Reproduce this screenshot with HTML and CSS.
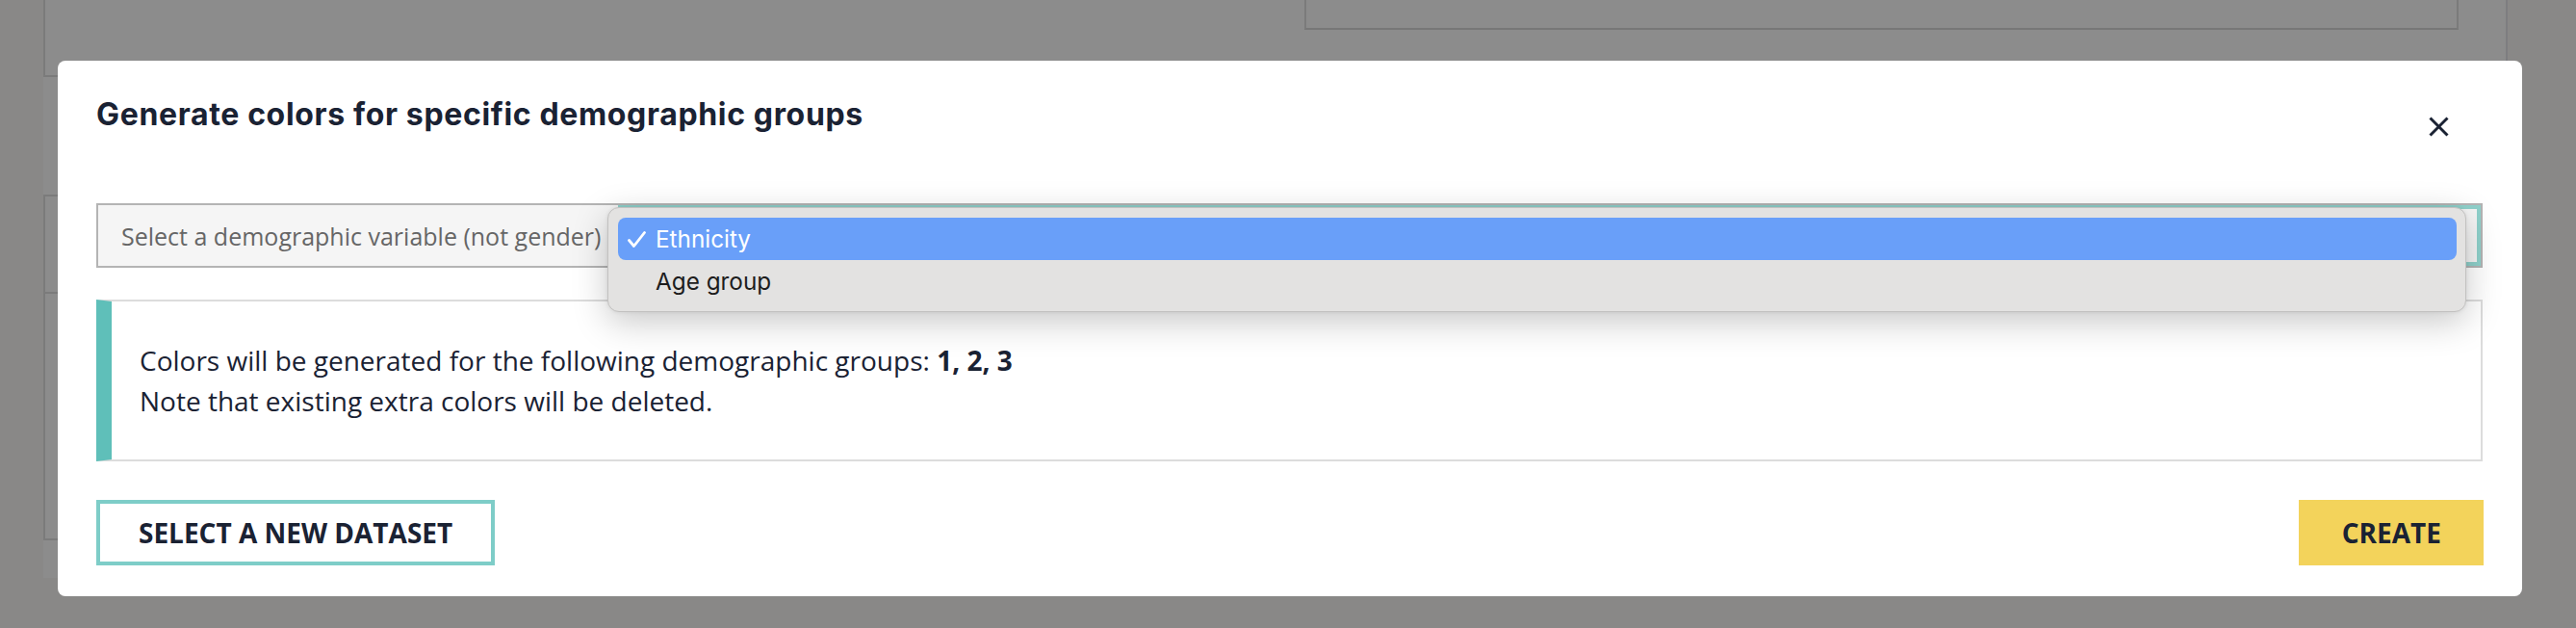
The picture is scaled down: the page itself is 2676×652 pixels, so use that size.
FILE: index.html
```html
<!DOCTYPE html>
<html lang="en">
<head>
<meta charset="utf-8">
<title>Generate colors</title>
<link rel="stylesheet" href="styles.css">
</head>
<body>
<div class="page">
  <div class="page-main">
    <div class="top-row">
      <div class="panel-a"></div>
      <div class="panel-b"></div>
    </div>
    <div class="panel-c"><div class="panel-c-head"></div></div>
  </div>
</div>

<div class="modal">
  <div class="modal-header">
    <h2 class="modal-title">Generate colors for specific demographic groups</h2>
    <button class="close-btn" aria-label="Close">
      <svg width="21" height="21" viewBox="0 0 21 21"><path d="M1.5 1.5 L19.5 19.5 M19.5 1.5 L1.5 19.5" stroke="#1a2233" stroke-width="3" fill="none"/></svg>
    </button>
  </div>
  <div class="select-box">
    <span class="select-text">Select a demographic variable (not gender)</span>
    <div class="popup">
      <div class="popup-item selected"><svg class="check" width="19" height="17" viewBox="0 0 19 17"><path d="M1.5 9.5 L6.5 15.5 L17.5 1.5" stroke="#fff" stroke-width="2.8" fill="none" stroke-linecap="round" stroke-linejoin="round"/></svg><span>Ethnicity</span></div>
      <div class="popup-item">Age group</div>
    </div>
  </div>
  <div class="info-box">
    <p>Colors will be generated for the following demographic groups: <strong>1, 2, 3</strong></p>
    <p>Note that existing extra colors will be deleted.</p>
  </div>
  <div class="actions">
    <button class="btn btn-outline">Select a new dataset</button>
    <button class="btn btn-primary">Create</button>
  </div>
</div>
</body>
</html>
```

FILE: styles.css
```css
* { box-sizing: border-box; }
html, body { margin: 0; padding: 0; }
body {
  width: 2676px;
  height: 652px;
  overflow: hidden;
  background: #898887;
  position: relative;
}

/* backdrop page (dimmed) */
.page { padding-left: 45px; }
.page-main {
  width: 2560px;
  height: 600px;
  background: #8c8c8c;
  border-right: 2px solid #7d7d80;
}
.top-row { display: flex; align-items: flex-start; }
.panel-a {
  width: 1200px;
  height: 80px;
  border-left: 2px solid #7b7b7b;
  border-bottom: 2px solid #7b7b7b;
}
.panel-b {
  margin-left: 110px;
  width: 1199px;
  height: 31px;
  border-left: 2px solid #7b7b7b;
  border-right: 2px solid #7b7b7b;
  border-bottom: 2px solid #777;
}
.panel-c {
  margin-top: 122px;
  width: 1200px;
  height: 359px;
  border: 2px solid #7b7b7b;
}
.panel-c-head { height: 101px; border-bottom: 2px solid #7b7b7b; }

/* modal */
.modal {
  position: absolute;
  left: 60px;
  top: 63px;
  width: 2560px;
  height: 556px;
  background: #fff;
  border-radius: 8px;
  padding: 32px 40px 32px 40px;
  display: flex;
  flex-direction: column;
  color: #1a2233;
}
.modal-header {
  height: 116px;
  display: flex;
  justify-content: space-between;
  align-items: flex-start;
}
.modal-title {
  margin: 0;
  font-family: Inter, "Liberation Sans", sans-serif;
  font-weight: 700;
  font-size: 32px;
  letter-spacing: 0.65px;
  line-height: 48px;
  color: #1a2233;
}
.close-btn {
  margin: 26px 36px 0 0;
  padding: 0;
  border: 0;
  background: none;
  width: 21px;
  height: 21px;
  display: block;
}
.close-btn svg { display: block; }

.select-box {
  position: relative;
  height: 67px;
  margin-right: 1px;
  border: 2px solid #b4b4b4;
  background: #f5f5f5;
  display: flex;
  align-items: center;
  padding-left: 24px;
  font-family: "Open Sans", sans-serif;
  font-size: 25px;
  color: #666;
}
.select-box::after {
  content: "";
  position: absolute;
  left: 540px;
  top: 0;
  right: 0;
  bottom: 0;
  border: 4px solid #8fd1cb;
  border-left: 0;
}
.popup {
  position: absolute;
  left: 529px;
  top: 2px;
  width: 1931px;
  height: 109px;
  background: #e3e2e1;
  border: 1px solid #c2c1c0;
  border-radius: 12px;
  box-shadow: 0 10px 36px rgba(0,0,0,0.22), 0 0 4px rgba(0,0,0,0.08);
  padding: 10px 9px 10px 10px;
  z-index: 2;
  font-family: Inter, "Liberation Sans", sans-serif;
  font-size: 24.3px;
  color: #1d1d1d;
}
.popup-item {
  height: 44px;
  display: flex;
  align-items: center;
  padding-left: 39px;
  border-radius: 8px;
}
.popup-item.selected {
  background: #699ff9;
  color: #fff;
  padding-left: 10px;
}
.check { margin-right: 10px; display: block; }

.info-box {
  margin-top: 33px;
  margin-right: 1px;
  height: 168px;
  border: 2px solid #dcdcdc;
  border-left: 16px solid #5fbfb9;
  padding: 40px 0 0 29px;
  font-family: "Open Sans", sans-serif;
  font-size: 28px;
  line-height: 42px;
  color: #1a2233;
}
.info-box p { margin: 0; }
.info-box strong { font-weight: 700; }

.actions {
  margin-top: 40px;
  display: flex;
  justify-content: space-between;
}
.btn {
  height: 68px;
  padding: 0 40px;
  border: 4px solid transparent;
  font-family: "Open Sans", sans-serif;
  font-weight: 700;
  font-size: 28px;
  text-transform: uppercase;
  color: #1a2233;
  background: transparent;
  display: flex;
  align-items: center;
}
.btn-outline { border-color: #7ecdc8; background: #fff; }
.btn-primary { background: #f3d35b; padding: 0 44px 0 45px; border: 0; }
```
